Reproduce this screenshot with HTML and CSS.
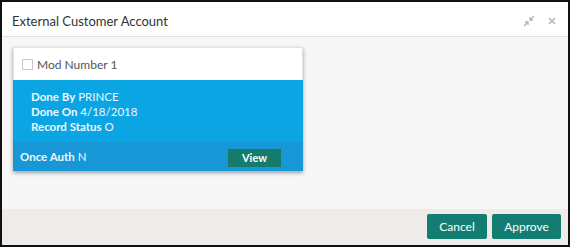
FILE: index.html
```html
<!DOCTYPE html>
<html lang="en">
<head>
    <meta charset="UTF-8">
    <meta name="viewport" content="width=device-width, initial-scale=1.0">
    <title>External Customer Account</title>
    <link rel="stylesheet" href="styles.css">
</head>
<body>
    <div class="dialog">
        <div class="dialog-header">
            <span class="dialog-title">External Customer Account</span>
            <div class="header-icons">
                <svg class="icon-compress" width="12" height="12" viewBox="0 0 12 12">
                    <path d="M11 1 L7.5 4.5 M7 2 V5 H10" stroke="#b5b5b5" stroke-width="1.3" fill="none"/>
                    <path d="M1 11 L4.5 7.5 M2 7 H5 V10" stroke="#b5b5b5" stroke-width="1.3" fill="none"/>
                </svg>
                <svg class="icon-close" width="8" height="8" viewBox="0 0 8 8">
                    <path d="M1 1 L7 7 M7 1 L1 7" stroke="#b5b5b5" stroke-width="1.5"/>
                </svg>
            </div>
        </div>

        <div class="dialog-body">
            <div class="mod-card">
                <div class="mod-head">
                    <span class="checkbox"></span>
                    <span>Mod Number 1</span>
                </div>
                <div class="mod-info">
                    <div><b>Done By</b> PRINCE</div>
                    <div><b>Done On</b> 4/18/2018</div>
                    <div><b>Record Status</b> O</div>
                </div>
                <div class="mod-foot">
                    <span><b>Once Auth</b> N</span>
                    <button class="view-btn">View</button>
                </div>
            </div>
        </div>

        <div class="dialog-footer">
            <button class="btn btn-cancel">Cancel</button>
            <button class="btn btn-approve">Approve</button>
        </div>
    </div>
</body>
</html>
```

FILE: styles.css
```css
body {
    margin: 0;
    font-family: 'Lato', sans-serif;
    background-color: #fff;
}
.dialog {
    width: 570px;
    height: 247px;
    box-sizing: border-box;
    border: 2px solid #111;
    display: flex;
    flex-direction: column;
    background: #fff;
}
.dialog-header {
    height: 35px;
    flex-shrink: 0;
    display: flex;
    align-items: center;
    justify-content: space-between;
    padding: 4px 12px 0 10px;
    box-sizing: border-box;
    border-bottom: 1px solid #e3e3e3;
}
.dialog-title {
    font-size: 13px;
    color: #333;
}
.header-icons {
    display: flex;
    align-items: center;
    gap: 13px;
}
.dialog-body {
    flex: 1;
    background: #f7f7f7;
    padding: 10px 11px;
}
.mod-card {
    width: 290px;
    box-shadow: 0 2px 4px rgba(0, 0, 0, 0.35);
}
.mod-head {
    height: 33px;
    box-sizing: border-box;
    background: #fff;
    border: 1px solid #e2e2e2;
    border-bottom: none;
    display: flex;
    align-items: center;
    padding-left: 8px;
    font-size: 12px;
    color: #555;
}
.checkbox {
    width: 9px;
    height: 9px;
    border: 1px solid #c8c8c8;
    margin-right: 4px;
}
.mod-info {
    height: 62px;
    box-sizing: border-box;
    background: #0ba5e3;
    color: #eef8fd;
    font-size: 11.5px;
    line-height: 15px;
    padding: 9px 0 0 18px;
}
.mod-foot {
    height: 29px;
    box-sizing: border-box;
    background: #1797d5;
    color: #eef8fd;
    font-size: 11.5px;
    display: flex;
    align-items: center;
    justify-content: space-between;
    padding: 0 22px 0 7px;
}
.view-btn {
    width: 53px;
    height: 18px;
    border: none;
    background: #157c6c;
    color: #fff;
    font-family: inherit;
    font-size: 11px;
    font-weight: bold;
    padding: 0;
    margin-top: 2px;
}
.dialog-footer {
    height: 36px;
    flex-shrink: 0;
    box-sizing: border-box;
    background: #eeebe8;
    display: flex;
    justify-content: flex-end;
    align-items: flex-start;
    gap: 5px;
    padding: 5px 7px 0 0;
}
.btn {
    height: 25px;
    border: none;
    border-radius: 2px;
    background: #147d71;
    color: #fff;
    font-family: inherit;
    font-size: 12px;
    padding: 0;
}
.btn-cancel {
    width: 60px;
}
.btn-approve {
    width: 69px;
}
```
